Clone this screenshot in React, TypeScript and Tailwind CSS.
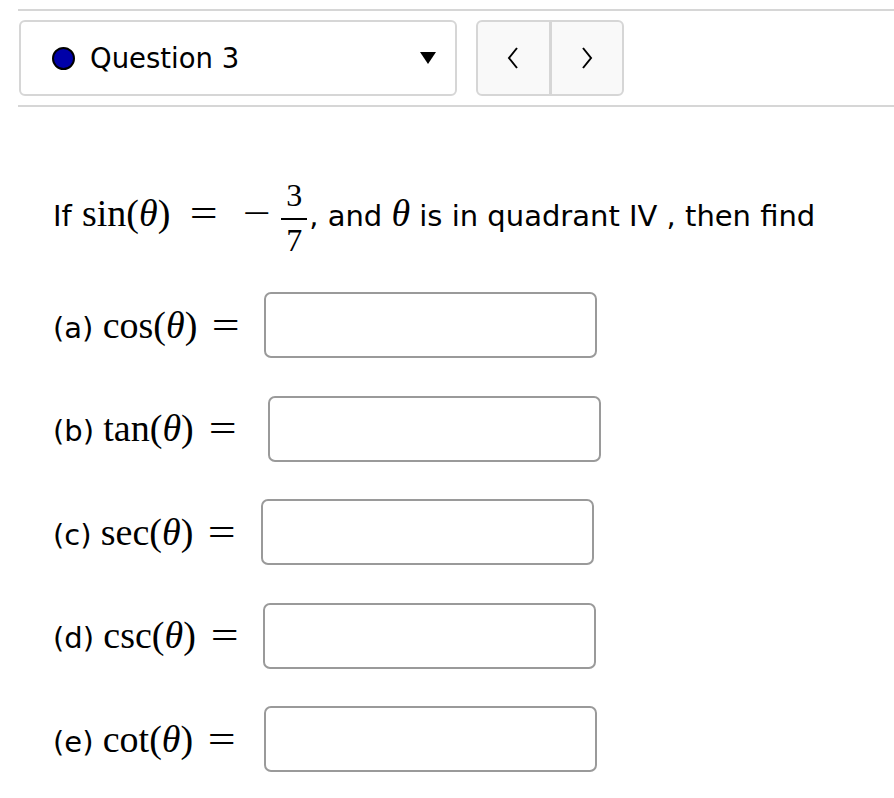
import React from 'react'

const rows = [
  { key: 'a', fn: 'cos', w: 'w-[211px]' },
  { key: 'b', fn: 'tan', w: 'w-[215px]' },
  { key: 'c', fn: 'sec', w: 'w-[208px]' },
  { key: 'd', fn: 'csc', w: 'w-[210px]' },
  { key: 'e', fn: 'cot', w: 'w-[211px]' },
]

function Theta() {
  return <span className="italic">θ</span>
}

function Fn({ name }: { name: string }) {
  return (
    <span className="font-['Liberation_Serif',serif] text-[38px]">
      {name}(<Theta />)
    </span>
  )
}

// wide relation sign, like the math font's "=" and "−"
function Op({ sym, className }: { sym: string; className: string }) {
  return (
    <span className={`inline-block scale-x-[1.3] font-['Liberation_Serif',serif] text-[38px] ${className}`}>
      {sym}
    </span>
  )
}

export default function App() {
  return (
    <div className="bg-white min-h-screen pl-[18px] pt-[9px] text-black font-['DejaVu_Sans',sans-serif]">
      <div className="h-[2px] bg-[#d6d6d6]" />

      <div className="mt-[9px] flex items-center gap-[19px]">
        <div className="w-[438px] h-[76px] ml-[1px] rounded-[6px] border-2 border-[#d6d6d6] flex items-center pl-[31px] pr-[19px]">
          <span className="w-[23px] h-[23px] rounded-full bg-[#0000a8] border-2 border-black" />
          <span className="ml-[15px] mt-[2px] text-[27.5px] leading-none">Question 3</span>
          <svg className="ml-auto" width="16" height="12" viewBox="0 0 16 12">
            <path d="M0 0 H16 L8 12 Z" fill="black" />
          </svg>
        </div>
        <div className="w-[148px] h-[76px] rounded-[6px] border-2 border-[#d6d6d6] bg-[#f9f9f9] flex">
          <div className="flex-1 flex items-center justify-center border-r-[3px] border-[#d6d6d6]">
            <svg width="12" height="22" viewBox="0 0 12 22">
              <path d="M10 1 L2 11 L10 21" fill="none" stroke="black" strokeWidth="2" />
            </svg>
          </div>
          <div className="flex-1 flex items-center justify-center">
            <svg width="12" height="22" viewBox="0 0 12 22">
              <path d="M2 1 L10 11 L2 21" fill="none" stroke="black" strokeWidth="2" />
            </svg>
          </div>
        </div>
      </div>

      <div className="mt-[9px] h-[2px] bg-[#d6d6d6]" />

      <div className="ml-[35px] pt-[75px]">
        <p className="text-[29px] leading-[40px] whitespace-nowrap">
          If <span className="ml-[1px]" />
          <Fn name="sin" />
          <Op sym="=" className="ml-[23px] mr-[31px]" />
          <Op sym="−" className="mr-[14px]" />
          <span className="inline-flex flex-col items-center align-middle font-['Liberation_Serif',serif] text-[32px] leading-[26px]">
            <span className="pb-[10px]">3</span>
            <span className="w-[26px] h-[2px] bg-black" />
            <span className="pt-[7px]">7</span>
          </span>
          <span className="ml-[2px]">, and </span>
          <span className="font-['Liberation_Serif',serif] text-[38px]"><Theta /></span> is in quadrant IV , then find
        </p>

        <div className="mt-[39px] flex flex-col gap-[37.5px]">
          {rows.map((r) => (
            <div key={r.key} className="flex items-center">
              <div className={`${r.w} text-[29px] whitespace-nowrap`}>
                ({r.key}) <Fn name={r.fn} />
                <Op sym="=" className="ml-[18px]" />
              </div>
              <div className="w-[333px] h-[66px] rounded-[7px] border-2 border-[#9a9a9a] bg-white" />
            </div>
          ))}
        </div>
      </div>
    </div>
  )
}
